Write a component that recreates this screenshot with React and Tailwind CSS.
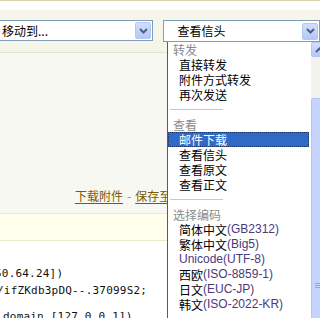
import React from 'react'

const CJK = "font-['Noto_Sans_CJK_SC',sans-serif]"

function Chevron({ up }) {
  return (
    <svg width="9" height="6" viewBox="0 0 9 6" className="block">
      <path
        d={up ? 'M1 5 L4.5 1.5 L8 5' : 'M1 1 L4.5 4.5 L8 1'}
        fill="none"
        stroke="#4d6185"
        strokeWidth="2"
      />
    </svg>
  )
}

function XpButton({ up, className = '' }) {
  return (
    <div
      className={`flex items-center justify-center rounded-[2px] border border-[#b4c7f3] bg-gradient-to-b from-[#d2defd] to-[#b5c8f6] ${className}`}
    >
      <Chevron up={up} />
    </div>
  )
}

function Latin({ children }) {
  return (
    <span className="inline-block h-[15px] align-top font-['Liberation_Sans',sans-serif] leading-[15px] text-[#4a3a7e]">
      {children}
    </span>
  )
}

function Header({ children }) {
  return <div className="h-[15px] leading-[15px] pl-[5px] text-[#8a8a8a]">{children}</div>
}

function Item({ children }) {
  return <div className="flex h-[15px] leading-[15px] pl-[11px] whitespace-nowrap">{children}</div>
}

function Sep() {
  return (
    <div className="h-[15px] flex items-center">
      <div className="ml-[2px] w-[53px] border-t border-[#c8c8c8]" />
    </div>
  )
}

export default function App() {
  return (
    <div className={`relative w-[320px] h-[318px] overflow-hidden bg-[#f8f8f3] text-[12px] text-black ${CJK}`}>
      {/* top strip */}
      <div className="h-px bg-[#d9d2a6]" />
      <div className="h-[9px] bg-white" />

      {/* toolbar */}
      <div className="h-[43px] bg-[#f6f5e9] border-b border-[#e4e2d0] flex items-start pt-[10px]">
        <div className="ml-[-10px] w-[167px] h-[21px] border border-[#7f9db9] bg-white flex items-center pl-[11px]">
          <span className="leading-none">移动到...</span>
          <XpButton className="ml-auto mr-px w-[16px] h-[17px]" />
        </div>
        <div className="ml-[10px] w-[160px] h-[22px] border border-[#7f9db9] bg-white flex items-center pl-[13px]">
          <span className="leading-none">查看信头</span>
          <XpButton className="ml-auto mr-px w-[16px] h-[17px]" />
        </div>
      </div>

      {/* content */}
      <div className="h-[160px] flex items-end pb-[10px] pl-[75px] whitespace-nowrap leading-[15px]">
        <a className="text-[#7a5c06] underline underline-offset-2">下载附件</a>
        <span className="mx-[4px] text-[#888]">-</span>
        <a className="text-[#7a5c06] underline underline-offset-2">保存至</a>
      </div>

      {/* notice band */}
      <div className="h-[28px] bg-[#fffdeb] border-y border-[#ece8cc]" />

      {/* message source */}
      <div className="bg-white h-[100px] pt-[24px] font-['DejaVu_Sans_Mono',monospace] text-[11px] tracking-[0.2px] leading-[17px] text-[#111] whitespace-nowrap">
        <div className="ml-[-5px]">50.64.24])</div>
        <div className="ml-[-3px]">/ifZKdb3pDQ--.37099S2;</div>
        <div className="ml-[3px] mt-[9px]">domain [127.0.0.1])</div>
      </div>

      {/* open dropdown list */}
      <div className="absolute left-[167px] top-[42px] w-[170px] h-[290px] border-l border-[#5a5a5a] bg-white flex">
        <div className="w-[142px] shrink-0">
          <Header>转发</Header>
          <Item>直接转发</Item>
          <Item>附件方式转发</Item>
          <Item>再次发送</Item>
          <Sep />
          <Header>查看</Header>
          <div className="w-[141px] h-[15px] leading-[13px] pl-[10px] bg-[#316ac5] text-white border border-dotted border-[#15306e]">
            邮件下载
          </div>
          <Item>查看信头</Item>
          <Item>查看原文</Item>
          <Item>查看正文</Item>
          <Sep />
          <Header>选择编码</Header>
          <Item>简体中文<Latin>(GB2312)</Latin></Item>
          <Item>繁体中文<Latin>(Big5)</Latin></Item>
          <Item><Latin>Unicode(UTF-8)</Latin></Item>
          <Item>西欧<Latin>(ISO-8859-1)</Latin></Item>
          <Item>日文<Latin>(EUC-JP)</Latin></Item>
          <Item>韩文<Latin>(ISO-2022-KR)</Latin></Item>
        </div>

        {/* scrollbar */}
        <div className="ml-px w-[17px] flex flex-col bg-[#f3f2ec]">
          <XpButton up className="h-[15px] w-full" />
          <div className="h-[41px]" />
          <div className="flex-1 rounded-t-[2px] border border-[#b3c6f4] bg-[#c5d4fc] pt-[184px] pl-[3px]">
            <div className="w-[8px] border-t border-[#8fa6dc]" />
            <div className="w-[8px] mt-[1px] border-t border-[#8fa6dc]" />
            <div className="w-[8px] mt-[1px] border-t border-[#8fa6dc]" />
          </div>
        </div>
      </div>
    </div>
  )
}
